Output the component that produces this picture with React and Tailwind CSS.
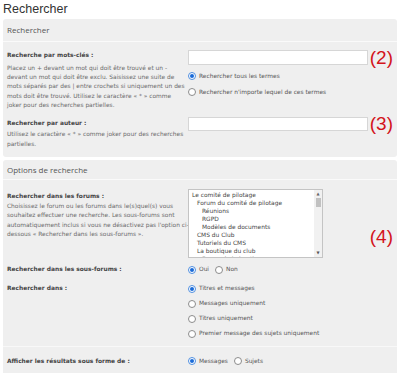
import React from 'react';

const body = { fontFamily: '"DejaVu Sans", Verdana, sans-serif' };

const Radio = ({ checked }) =>
    checked ? (
        <span className="w-[8px] h-[8px] rounded-full border border-[#4f8fe0] bg-white flex items-center justify-center shrink-0">
            <span className="w-[4px] h-[4px] rounded-full bg-[#1a6bd8]"></span>
        </span>
    ) : (
        <span className="w-[8px] h-[8px] rounded-full border border-[#8c8c8c] bg-white shrink-0"></span>
    );

const RadioLine = ({ checked, label, h = 'h-[16px]' }) => (
    <div className={`flex items-center gap-[3px] ${h}`}>
        <Radio checked={checked} />
        <span className="text-[5.9px] text-[#555] whitespace-nowrap">{label}</span>
    </div>
);

const Lines = ({ lines, lh = 'leading-[9.3px]' }) => (
    <div className={`text-[5.9px] text-[#6a6a6a] ${lh}`}>
        {lines.map((l, i) => (
            <div key={i} className="whitespace-nowrap">{l}</div>
        ))}
    </div>
);

const Label = ({ children }) => (
    <div className="text-[5.9px] font-bold text-[#444] leading-[9px] whitespace-nowrap">{children}</div>
);

const Mark = ({ children }) => (
    <span className="text-[19px] leading-none text-[#d3141b] w-[25px] text-right shrink-0" style={{ fontFamily: '"Liberation Sans", Arial, sans-serif' }}>
        {children}
    </span>
);

const Panel = ({ title, children }) => (
    <div className="mx-[3px] bg-[#efefef] rounded-[3px]">
        <div className="border-b border-[#fafafa] px-[4px] text-[8px] text-[#555]" style={{ fontFamily: '"Open Sans", sans-serif' }}>
            {title}
        </div>
        {children}
    </div>
);

const forums = [
    ['Le comité de pilotage', 0],
    ['Forum du comité de pilotage', 1],
    ['Réunions', 2],
    ['RGPD', 2],
    ['Modèles de documents', 2],
    ['CMS du Club', 1],
    ['Tutoriels du CMS', 1],
    ['La boutique du club', 1],
    ['Forum de la boutique', 2],
];

export default function App() {
    return (
        <div className="w-[400px] h-[373px] bg-white overflow-hidden" style={body}>
            <div className="pl-[3px] h-[19px] text-[12.5px] leading-[19px] text-[#333]" style={{ fontFamily: '"Liberation Sans", Arial, sans-serif' }}>
                Rechercher
            </div>

            <Panel title={<div className="h-[22px] flex items-center">Rechercher</div>}>
                <div className="grid grid-cols-[181px_1fr] pl-[4px]">
                    <div className="pt-[9px]">
                        <Label>Recherche par mots-clés :</Label>
                        <div className="mt-[4px]">
                            <Lines
                                lh="leading-[9.2px]"
                                lines={[
                                    'Placez un + devant un mot qui doit être trouvé et un -',
                                    'devant un mot qui doit être exclu. Saisissez une suite de',
                                    'mots séparés par des | entre crochets si uniquement un des',
                                    'mots doit être trouvé. Utilisez le caractère « * » comme',
                                    'joker pour des recherches partielles.',
                                ]}
                            />
                        </div>
                    </div>
                    <div className="pt-[6px] pr-[4px]">
                        <div className="flex items-center">
                            <div className="flex-1 h-[15px] bg-white border border-[#d6d6d6]"></div>
                            <Mark>(2)</Mark>
                        </div>
                        <div className="mt-[1px]">
                            <RadioLine checked label="Rechercher tous les termes" />
                            <RadioLine label="Rechercher n'importe lequel de ces termes" />
                        </div>
                    </div>
                </div>
                <div className="grid grid-cols-[181px_1fr] pl-[4px] pb-[8px]">
                    <div className="pt-[9px]">
                        <Label>Rechercher par auteur :</Label>
                        <div className="mt-[1px]">
                            <Lines
                                lh="leading-[10px]"
                                lines={['Utilisez le caractère « * » comme joker pour des recherches', 'partielles.']}
                            />
                        </div>
                    </div>
                    <div className="pt-[4px] pr-[4px]">
                        <div className="flex items-center">
                            <div className="flex-1 h-[14px] bg-white border border-[#d6d6d6]"></div>
                            <Mark>(3)</Mark>
                        </div>
                    </div>
                </div>
            </Panel>

            <div className="h-[3px]"></div>

            <Panel title={<div className="h-[19px] flex items-center">Options de recherche</div>}>
                <div className="grid grid-cols-[181px_1fr] pl-[4px] relative">
                    <div className="pt-[12px]">
                        <Label>Rechercher dans les forums :</Label>
                        <div className="mt-[1px]">
                            <Lines
                                lines={[
                                    'Choisissez le forum ou les forums dans le(s)quel(s) vous',
                                    'souhaitez effectuer une recherche. Les sous-forums sont',
                                    "automatiquement inclus si vous ne désactivez pas l'option ci-",
                                    'dessous « Rechercher dans les sous-forums ».',
                                ]}
                            />
                        </div>
                    </div>
                    <div className="pt-[9px]">
                        <div className="w-[135px] h-[69px] bg-white border border-[#c4c4c4] flex overflow-hidden">
                            <div className="flex-1 pl-[3px] pt-[1px] text-[5.9px] leading-[8px] text-[#444]">
                                {forums.map(([name, lvl]) => (
                                    <div key={name} className={`whitespace-nowrap ${lvl === 1 ? 'pl-[5px]' : lvl === 2 ? 'pl-[10px]' : ''}`}>
                                        {name}
                                    </div>
                                ))}
                            </div>
                            <div className="w-[8px] bg-[#f1f1f1] flex flex-col items-center">
                                <div className="h-[8px] flex items-center text-[#666] text-[4px] leading-none">▲</div>
                                <div className="w-[5px] h-[9px] bg-[#c1c1c1]"></div>
                                <div className="flex-1"></div>
                                <div className="h-[8px] flex items-center text-[#555] text-[4px] leading-none">▼</div>
                            </div>
                        </div>
                    </div>
                    <div className="absolute right-[4px] top-[46px]">
                        <Mark>(4)</Mark>
                    </div>
                </div>

                <div className="grid grid-cols-[181px_1fr] pl-[4px] h-[23px] items-center">
                    <Label>Rechercher dans les sous-forums :</Label>
                    <div className="flex items-center gap-[6px]">
                        <RadioLine checked label="Oui" h="h-[12px]" />
                        <RadioLine label="Non" h="h-[12px]" />
                    </div>
                </div>

                <div className="grid grid-cols-[181px_1fr] pl-[4px] border-b border-[#f8f8f8] pb-[5px]">
                    <div className="h-[15px] flex items-center">
                        <Label>Rechercher dans :</Label>
                    </div>
                    <div>
                        <RadioLine checked label="Titres et messages" h="h-[15px]" />
                        <RadioLine label="Messages uniquement" h="h-[15px]" />
                        <RadioLine label="Titres uniquement" h="h-[15px]" />
                        <RadioLine label="Premier message des sujets uniquement" h="h-[15px]" />
                    </div>
                </div>

                <div className="grid grid-cols-[181px_1fr] pl-[4px] h-[28px] items-center">
                    <Label>Afficher les résultats sous forme de :</Label>
                    <div className="flex items-center gap-[6px]">
                        <RadioLine checked label="Messages" h="h-[12px]" />
                        <RadioLine label="Sujets" h="h-[12px]" />
                    </div>
                </div>
            </Panel>
        </div>
    );
}
